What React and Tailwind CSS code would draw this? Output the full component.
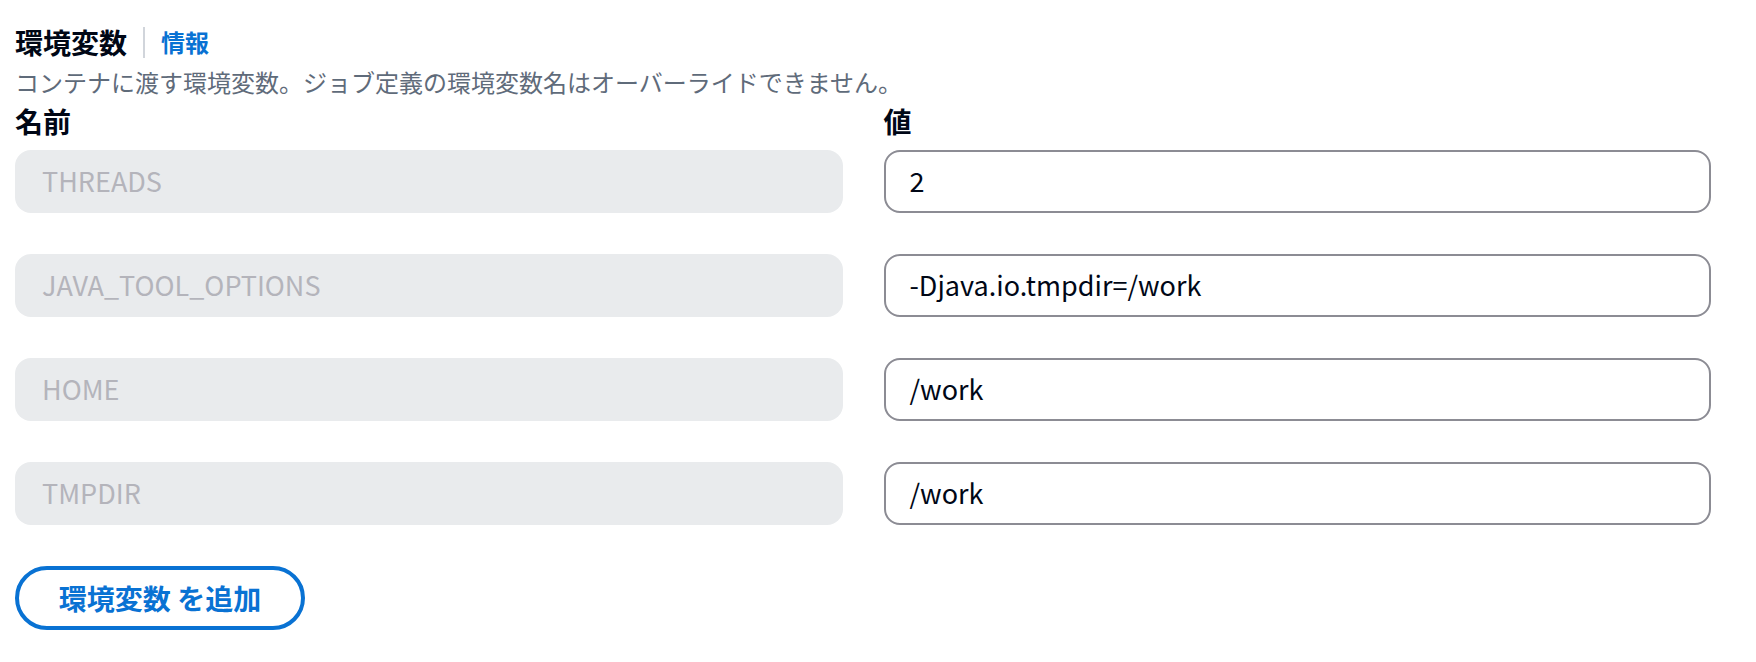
const rows = [
  { name: "THREADS", value: "2" },
  { name: "JAVA_TOOL_OPTIONS", value: "-Djava.io.tmpdir=/work" },
  { name: "HOME", value: "/work" },
  { name: "TMPDIR", value: "/work" },
];

const font = "font-['Noto_Sans_CJK_JP','Noto_Sans',sans-serif]";

const App = () => {
  return (
    <div className={`min-h-screen bg-white pl-[15px] pt-[24px] text-[#000716] ${font}`}>
      {/* Field header */}
      <div className="flex items-center h-[36px]">
        <span className="text-[28px] leading-[36px] font-bold">環境変数</span>
        <span className="mx-[16px] h-[31px] w-[2px] bg-[#d1d5db]" />
        <a href="#" className="text-[24px] leading-[36px] font-bold text-[#0972d3]">
          情報
        </a>
      </div>
      <p className="text-[24px] leading-[32px] text-[#5f6b7a] mt-[6px]">
        コンテナに渡す環境変数。ジョブ定義の環境変数名はオーバーライドできません。
      </p>

      {/* Key / value rows */}
      <div className="grid grid-cols-2 gap-x-[41px] w-[1696px] mt-[7px]">
        <div className="text-[28px] leading-[32px] font-bold mb-[13px]">名前</div>
        <div className="text-[28px] leading-[32px] font-bold mb-[13px]">値</div>
        {rows.map((row, i) => (
          <div key={row.name} className="contents">
            <div
              className={`h-[63px] rounded-[16px] bg-[#e9ebed] pl-[27px] flex items-center text-[27px] text-[#b4b4bb] ${
                i < rows.length - 1 ? "mb-[41px]" : ""
              }`}
            >
              {row.name}
            </div>
            <div
              className={`h-[63px] rounded-[16px] border-2 border-[#8c8c94] pl-[24px] flex items-center text-[27px] text-[#000716] ${
                i < rows.length - 1 ? "mb-[41px]" : ""
              }`}
            >
              {row.value}
            </div>
          </div>
        ))}
      </div>

      <button
        type="button"
        className="mt-[41px] h-[64px] w-[290px] rounded-full border-[4px] border-[#0972d3] text-[28px] font-bold text-[#0972d3] flex items-center justify-center"
      >
        環境変数 を追加
      </button>
    </div>
  );
};

export default App;
